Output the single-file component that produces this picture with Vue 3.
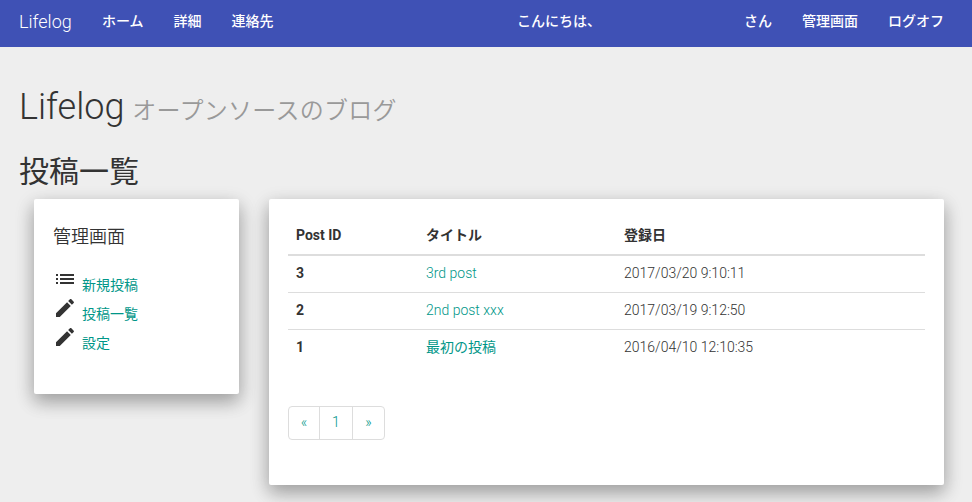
<script setup>
const mainLinks = ['ホーム', '詳細', '連絡先']
const adminLinks = [
  { icon: 'list', label: '新規投稿' },
  { icon: 'edit', label: '投稿一覧' },
  { icon: 'edit', label: '設定' },
]
const iconPaths = {
  list: 'M3 13h2v-2H3v2zm0 4h2v-2H3v2zm0-8h2V7H3v2zm4 4h14v-2H7v2zm0 4h14v-2H7v2zM7 7v2h14V7H7z',
  edit: 'M3 17.25V21h3.75L17.81 9.94l-3.75-3.75L3 17.25zM20.71 7.04c.39-.39.39-1.02 0-1.41l-2.34-2.34c-.39-.39-1.02-.39-1.41 0l-1.83 1.83 3.75 3.75 1.83-1.83z',
}
const posts = [
  { id: 3, title: '3rd post', date: '2017/03/20 9:10:11' },
  { id: 2, title: '2nd post xxx', date: '2017/03/19 9:12:50' },
  { id: 1, title: '最初の投稿', date: '2016/04/10 12:10:35', wide: true },
]
</script>

<template>
  <div class="page">
    <nav class="navbar">
      <a class="brand">Lifelog</a>
      <a v-for="link in mainLinks" :key="link" class="nav-link">{{ link }}</a>
      <div class="nav-user">
        <a class="greeting"><span>こんにちは、</span><span>さん</span></a>
        <a>管理画面</a>
        <a>ログオフ</a>
      </div>
    </nav>
    <main class="content">
      <h1>Lifelog <small>オープンソースのブログ</small></h1>
      <h2>投稿一覧</h2>
      <div class="columns">
        <aside class="well sidebar">
          <h4>管理画面</h4>
          <ul>
            <li v-for="item in adminLinks" :key="item.label">
              <svg viewBox="0 0 24 24" width="24" height="24"><path :d="iconPaths[item.icon]" /></svg>
              <a>{{ item.label }}</a>
            </li>
          </ul>
        </aside>
        <section class="well posts">
          <table>
            <thead>
              <tr>
                <th class="col-id">Post ID</th>
                <th class="col-title">タイトル</th>
                <th>登録日</th>
              </tr>
            </thead>
            <tbody>
              <tr v-for="post in posts" :key="post.id">
                <th>{{ post.id }}</th>
                <td><a :class="{ wide: post.wide }">{{ post.title }}</a></td>
                <td>{{ post.date }}</td>
              </tr>
            </tbody>
          </table>
          <div class="pagination">
            <a class="arrow">«</a>
            <a class="current">1</a>
            <a class="arrow">»</a>
          </div>
        </section>
      </div>
    </main>
  </div>
</template>

<style>
body {
  margin: 0;
  background: #eee;
  overflow: hidden;
}
</style>

<style scoped>
.page {
  height: 502px;
  overflow: hidden;
  background: #eee;
  color: #333;
  font: 300 14px/20px Roboto, "Noto Sans CJK JP", sans-serif;
}
.page * {
  box-sizing: border-box;
}
a {
  color: #009688;
}
.navbar {
  display: flex;
  align-items: flex-start;
  height: 47px;
  padding: 11px 28px 0 19px;
  background: #3f51b5;
  font-weight: 500;
  white-space: nowrap;
}
.navbar a {
  color: #fff;
}
.brand {
  width: 83px;
  font-size: 18px;
  font-weight: 300;
  line-height: 22px;
}
.nav-link {
  margin-right: 30px;
}
.nav-user {
  display: flex;
  gap: 30px;
  margin-left: auto;
}
.greeting {
  display: flex;
  justify-content: space-between;
  width: 255px;
}
.content {
  padding: 0 28px 0 19px;
}
h1,
h2,
h4 {
  margin: 0;
  font-weight: 300;
}
h1 {
  padding-top: 40px;
  font-size: 36px;
  line-height: 40px;
  white-space: nowrap;
}
h1 small {
  margin-left: -1px;
  color: #999;
  font-size: 24px;
  font-weight: 350;
  letter-spacing: 0.3px;
}
h2 {
  padding-top: 24px;
  font-size: 30px;
  font-weight: 400;
  line-height: 34px;
}
.columns {
  display: flex;
  align-items: flex-start;
  gap: 30px;
  padding: 10px 0 0 15px;
}
.well {
  padding: 19px;
  border-radius: 2px;
  background: #fff;
  box-shadow: 0 8px 17px 0 rgba(0, 0, 0, 0.2), 0 6px 20px 0 rgba(0, 0, 0, 0.19);
}
.sidebar {
  width: 205px;
  height: 195px;
}
h4 {
  padding-top: 9px;
  font-size: 18px;
  font-weight: 350;
  line-height: 20px;
}
ul {
  margin: 20px 0 0;
  padding: 0;
  list-style: none;
}
li {
  display: flex;
  align-items: flex-start;
  height: 29px;
}
li svg {
  flex: none;
  fill: #333;
}
li a,
.wide {
  font-weight: 400;
}
li a {
  padding: 8px 0 0 5px;
}
.posts {
  flex: 1;
  height: 286px;
}
table {
  width: 100%;
  border-spacing: 0;
  table-layout: fixed;
}
th,
td {
  height: 36px;
  padding: 7px 8px 9px;
  line-height: 20px;
  text-align: left;
}
th {
  font-weight: 700;
}
thead th {
  height: 38px;
  border-bottom: 2px solid #ddd;
}
tbody tr + tr > * {
  height: 37px;
  border-top: 1px solid #ddd;
}
.col-id {
  width: 130px;
}
.col-title {
  width: 198px;
}
.pagination {
  display: inline-flex;
  margin-top: 40px;
  border: 1px solid #ddd;
  border-radius: 4px;
}
.pagination a {
  height: 32px;
  padding-top: 5px;
  text-align: center;
}
.pagination a:first-child {
  width: 30px;
}
.pagination a + a {
  width: 33px;
  border-left: 1px solid #ddd;
}
.pagination a + a + a {
  width: 32px;
}
</style>
